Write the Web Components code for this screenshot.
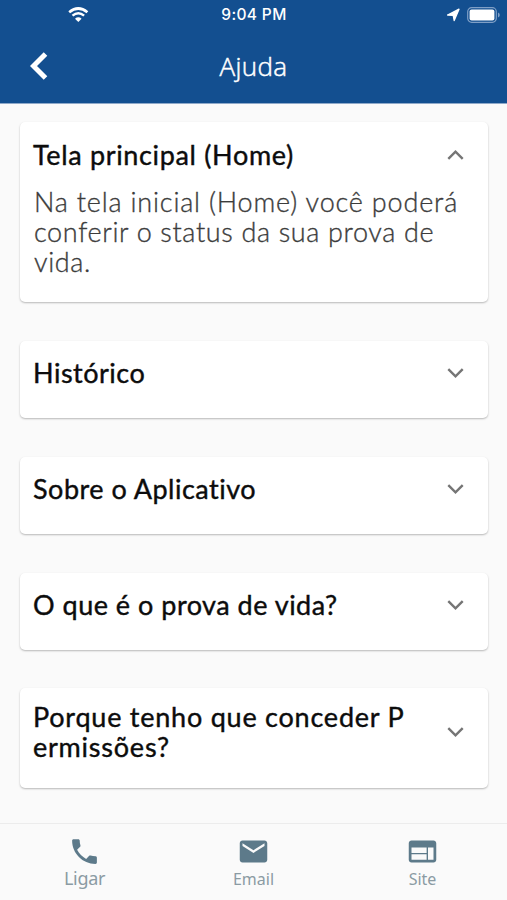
<!DOCTYPE html>
<html lang="pt-BR">
<head>
<meta charset="utf-8">
<meta name="viewport" content="width=device-width, initial-scale=1">
<title>Ajuda</title>
<style>
    html, body {
        margin: 0;
        height: 100%;
        background: #fafafa;
        font-family: Lato, "Open Sans", sans-serif;
    }
</style>
</head>
<body>
<help-app></help-app>

<script>
/**
 * Base class: attaches an open shadow root and fills it from template()
 */
class BaseElement extends HTMLElement {
    constructor() {
        super();
        this.attachShadow({ mode: 'open' });
    }

    connectedCallback() {
        this.shadowRoot.innerHTML = this.template();
    }
}

/**
 * Phone status bar: wifi, clock, location and battery
 */
class StatusBar extends BaseElement {
    template() {
        return `
            <style>
                :host {
                    display: grid;
                    grid-template-columns: 1fr auto 1fr;
                    align-items: center;
                    height: 29px;
                    padding: 0 7px 0 68px;
                    color: #fff;
                }
                svg { display: block; }
                .time {
                    font: 500 15.5px/20px Inter, sans-serif;
                    letter-spacing: 0.35px;
                    transform: translateX(-30px);
                    white-space: nowrap;
                }
                .right {
                    display: flex;
                    justify-content: flex-end;
                    align-items: center;
                    gap: 7px;
                }
            </style>
            <svg width="21" height="16" viewBox="0 0 21 16" fill="none" stroke="#fff">
                <path d="M1.2 5.2Q10.3-2.2 19.4 5.2" stroke-width="2.7"/>
                <path d="M4.5 8.6Q10.3 3.8 16.1 8.6" stroke-width="2.5"/>
                <path d="M7 11.7Q10.3 9 13.6 11.7L10.3 15z" fill="#fff" stroke="none"/>
            </svg>
            <span class="time">9:04 PM</span>
            <div class="right">
                <svg width="14" height="14" viewBox="0 0 14 14"><path d="M13 1.2L8.2 12.6 7.2 7.3 1.6 7z" fill="#fff" stroke="#fff" stroke-width="1.3" stroke-linejoin="round"/></svg>
                <svg width="33" height="16" viewBox="0 0 33 16">
                    <rect x=".7" y=".7" width="28.6" height="14.6" rx="4" fill="none" stroke="#7f9fc6" stroke-width="1.2"/>
                    <rect x="2.6" y="2.6" width="24.8" height="10.8" rx="2" fill="#fff"/>
                    <path d="M31 5.6q1.8.6 1.8 2.4T31 10.4z" fill="#7f9fc6"/>
                </svg>
            </div>
        `;
    }
}

class TopBar extends BaseElement {
    template() {
        return `
            <style>
                :host {
                    display: block;
                    height: 104px;
                    background: #134f90;
                    border-bottom: 1px solid #8fa9c9;
                    box-sizing: border-box;
                    color: #fff;
                    flex: none;
                }
                .bar {
                    display: grid;
                    grid-template-columns: 1fr auto 1fr;
                    align-items: center;
                    height: 73px;
                    padding: 0 30px;
                }
                svg { display: block; }
                h1 {
                    margin: 0;
                    font: 300 26px/30px "Open Sans", sans-serif;
                    letter-spacing: 0.4px;
                    -webkit-text-stroke: 0.5px #fff;
                }
            </style>
            <status-bar></status-bar>
            <div class="bar">
                <svg width="18" height="28" viewBox="0 0 18 28"><path d="M15.5 2L3.5 14l12 12" fill="none" stroke="#fff" stroke-width="5"/></svg>
                <h1><slot></slot></h1>
            </div>
        `;
    }
}

/**
 * Expandable card. The default slot is the body, shown while "open" is set
 */
class HelpCard extends BaseElement {
    template() {
        return `
            <style>
                :host {
                    display: block;
                    background: #fff;
                    border-radius: 5px;
                    box-shadow: 0 1px 2px rgba(0, 0, 0, 0.27);
                    padding: 14px 14px 27px 13px;
                }
                :host([open]) { padding: 15px 14px 25px 13px; }
                :host([tall]) {
                    margin-top: -1px;
                    padding-bottom: 26px;
                }
                header {
                    display: flex;
                    align-items: center;
                    justify-content: space-between;
                    min-height: 36px;
                    cursor: pointer;
                }
                h2 {
                    margin: 0;
                    font-size: 27px;
                    line-height: 30px;
                    font-weight: 400;
                    color: #0c0c0c;
                    letter-spacing: var(--title-spacing, 0.5px);
                    -webkit-text-stroke: 0.4px #0c0c0c;
                    white-space: pre;
                }
                svg {
                    flex: none;
                    display: block;
                    margin-right: 10px;
                }
                :host([open]) svg { transform: rotate(180deg); }
                .body {
                    display: none;
                    margin: 14px 0 0 1px;
                    font-size: 27px;
                    line-height: 30px;
                    font-weight: 300;
                    color: #3c3c3c;
                    -webkit-text-stroke: 0.35px #3c3c3c;
                    white-space: pre;
                }
                ::slotted(.line) {
                    display: block;
                    letter-spacing: 0.65px;
                }
                ::slotted(.line.wide) { letter-spacing: 0.82px; }
                :host([open]) .body { display: block; }
            </style>
            <header>
                <h2><slot name="title"></slot></h2>
                <svg width="17" height="12" viewBox="0 0 17 12"><path d="M1.3 2.2l7.2 7.2 7.2-7.2" fill="none" stroke="#757575" stroke-width="2.4"/></svg>
            </header>
            <div class="body"><slot></slot></div>
        `;
    }

    connectedCallback() {
        super.connectedCallback();
        this.shadowRoot.querySelector('header').addEventListener('click', () => {
            this.toggleAttribute('open');
        });
    }
}

const NAV_ICONS = {
    phone: 'M6.62 10.79c1.44 2.83 3.76 5.14 6.59 6.59l2.2-2.2c.27-.27.67-.36 1.02-.24 1.12.37 2.33.57 3.57.57.55 0 1 .45 1 1V20c0 .55-.45 1-1 1-9.39 0-17-7.61-17-17 0-.55.45-1 1-1h3.5c.55 0 1 .45 1 1 0 1.25.2 2.45.57 3.57.11.35.03.74-.25 1.02l-2.2 2.2z',
    email: 'M20 4H4c-1.1 0-1.99.9-1.99 2L2 18c0 1.1.9 2 2 2h16c1.1 0 2-.9 2-2V6c0-1.1-.9-2-2-2zm0 4l-8 5-8-5V6l8 5 8-5v2z',
    web: 'M20 4H4c-1.1 0-1.99.9-1.99 2L2 18c0 1.1.9 2 2 2h16c1.1 0 2-.9 2-2V6c0-1.1-.9-2-2-2zm-5 14H4v-4h11v4zm0-5H4V9h11v4zm5 5h-4V9h4v9z'
};

class NavItem extends BaseElement {
    template() {
        return `
            <style>
                :host {
                    display: flex;
                    flex-direction: column;
                    align-items: center;
                    flex: 1;
                    padding-top: 11px;
                    color: #8b9ba3;
                    font: 400 16px/20px "Noto Sans", sans-serif;
                }
                :host([active]) {
                    font-size: 18px;
                    line-height: 18px;
                    letter-spacing: -0.3px;
                }
                svg { display: block; }
                span { margin-top: 1px; }
            </style>
            <svg width="33" height="33" viewBox="0 0 24 24" fill="#5d7a8a"><path d="${NAV_ICONS[this.getAttribute('icon')]}"/></svg>
            <span><slot></slot></span>
        `;
    }
}

class BottomNav extends BaseElement {
    template() {
        return `
            <style>
                :host {
                    display: flex;
                    flex: none;
                    height: 77px;
                    box-sizing: border-box;
                    border-top: 1px solid #ececec;
                    background: #fafafa;
                }
            </style>
            <slot></slot>
        `;
    }
}

class HelpApp extends BaseElement {
    template() {
        return `
            <style>
                :host {
                    display: flex;
                    flex-direction: column;
                    height: 900px;
                    overflow: hidden;
                }
                main {
                    flex: 1;
                    display: flex;
                    flex-direction: column;
                    gap: 39px;
                    padding: 18px 19px 0 20px;
                }
                .intro {
                    --title-spacing: 0.66px;
                }
                .permissions {
                    --title-spacing: 0.77px;
                }
            </style>
            <top-bar>Ajuda</top-bar>
            <main>
                <help-card class="intro" open><span slot="title">Tela principal (Home)</span><span class="line wide">Na tela inicial (Home) você poderá</span><span class="line">conferir o status da sua prova de</span><span class="line">vida.</span></help-card>
                <help-card><span slot="title">Histórico</span></help-card>
                <help-card><span slot="title">Sobre o Aplicativo</span></help-card>
                <help-card><span slot="title">O que é o prova de vida?</span></help-card>
                <help-card class="permissions" tall><span slot="title">Porque tenho que conceder P
ermissões?</span></help-card>
            </main>
            <bottom-nav>
                <nav-item icon="phone" active>Ligar</nav-item>
                <nav-item icon="email">Email</nav-item>
                <nav-item icon="web">Site</nav-item>
            </bottom-nav>
        `;
    }
}

customElements.define('status-bar', StatusBar);
customElements.define('top-bar', TopBar);
customElements.define('help-card', HelpCard);
customElements.define('nav-item', NavItem);
customElements.define('bottom-nav', BottomNav);
customElements.define('help-app', HelpApp);
</script>
</body>
</html>
